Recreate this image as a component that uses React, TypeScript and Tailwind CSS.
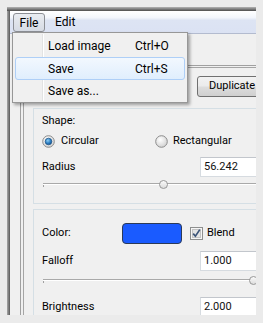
import React from "react";

function Radio({ checked }: { checked?: boolean }) {
  return (
    <svg width="13" height="13" viewBox="0 0 13 13" className="shrink-0">
      <defs>
        <radialGradient id="rOff" cx="40%" cy="35%" r="70%">
          <stop offset="0%" stopColor="#ffffff" />
          <stop offset="100%" stopColor="#cfcfcf" />
        </radialGradient>
        <radialGradient id="rOn" cx="40%" cy="35%" r="70%">
          <stop offset="0%" stopColor="#8fd0f5" />
          <stop offset="60%" stopColor="#2a7cc2" />
          <stop offset="100%" stopColor="#124c86" />
        </radialGradient>
      </defs>
      <circle cx="6.5" cy="6.5" r="5.8" fill="url(#rOff)" stroke="#8c8c8c" strokeWidth="1" />
      {checked && <circle cx="6.5" cy="6.5" r="3.3" fill="url(#rOn)" stroke="#255b8c" strokeWidth="0.8" />}
    </svg>
  );
}

function Checkbox() {
  return (
    <svg width="13" height="13" viewBox="0 0 13 13" className="shrink-0">
      <rect x="0.5" y="0.5" width="12" height="12" fill="#f6f6f6" stroke="#8e8f8f" />
      <rect x="2.5" y="2.5" width="8" height="8" fill="#e4e4e4" stroke="#c4c4c4" />
      <path d="M3.2 6.6 L5.4 9.2 L9.8 2.6" fill="none" stroke="#3b5478" strokeWidth="1.7" />
    </svg>
  );
}

function Slider({ thumb, className = "" }: { thumb: number; className?: string }) {
  return (
    <div className={`relative h-[14px] w-[230px] ${className}`}>
      <div className="absolute left-[1px] top-[5px] w-[1px] h-[4px] bg-[#a0a0a0]" />
      <div className="absolute left-[1px] right-0 top-[5px] h-[2px] border-t border-b border-t-[#a9a9a9] border-b-white" />
      <div
        className="absolute top-[2px] w-[9px] h-[9px] rounded-full border border-[#979797] bg-[linear-gradient(#fafafa,#dcdcdc)]"
        style={{ left: thumb }}
      />
    </div>
  );
}

function NumberBox({ value }: { value: string }) {
  return (
    <div className="w-[62px] h-[20px] shrink-0 bg-white border border-[#d6dbe0] border-t-[#c2c6cc] pl-[3px] flex items-center text-[11px] text-[#111]">
      {value}
    </div>
  );
}

function Row({ label, value, className = "" }: { label: string; value: string; className?: string }) {
  return (
    <div className={`flex items-center h-[20px] ${className}`}>
      <span className="w-[158px] shrink-0">{label}</span>
      <NumberBox value={value} />
    </div>
  );
}

export default function App() {
  return (
    <div className="relative w-[263px] h-[323px] overflow-hidden bg-[#ebebeb] pt-[7px] pl-[7px] font-['Roboto',sans-serif] text-black">
      <div className="w-[249px] h-[308px] flex flex-col overflow-hidden">
        <div className="h-[4px] shrink-0 bg-[linear-gradient(#b4b4b4,#4c4c4c)]" />
        <div className="flex flex-1 min-h-0">
          <div className="w-[3px] shrink-0 bg-[linear-gradient(90deg,#a8a8a8,#585858)]" />
          <div className="flex-1 min-w-0 bg-[#f0f0f0] flex flex-col overflow-hidden">
            {/* menu bar */}
            <div className="h-[23px] shrink-0 border-b border-[#b3bbcf] bg-[linear-gradient(#ffffff,#f3f6fc_30%,#dde4f3_42%,#dbe2f3)] flex items-start pl-[3px] text-[12px]">
              <div className="mt-[2px] h-[19px] w-[32px] rounded-[3px] border border-[#8c8f95] bg-[linear-gradient(#e9ecf1,#d6dbe4)] flex items-center justify-center">
                File
              </div>
              <div className="ml-[10px] h-[22px] flex items-center">Edit</div>
            </div>

            {/* main panel */}
            <div className="ml-[10px] mt-[31px] w-[260px] border-t border-l border-[#a0a0a0] pl-[2px] pt-[1px] flex-1">
              <div className="border-t border-l border-[#a5a5a5] h-full text-[11px]">
                <div className="ml-[173px] mt-[8px] h-[21px] w-[75px] rounded-[3px] border border-[#707070] bg-[linear-gradient(#f2f2f2,#ebebeb_48%,#dddddd_52%,#cfcfcf)] pl-[11px] flex items-center">
                  Duplicate
                </div>

                {/* shape group */}
                <div className="ml-[9px] mt-[11px] h-[96px] border-t border-l border-b border-[#d5dfe5] pl-[8px]">
                  <div className="h-[24px] flex items-center">Shape:</div>
                  <div className="h-[16px] flex items-center">
                    <div className="w-[113px] flex items-center gap-[6px]">
                      <Radio checked />
                      <span>Circular</span>
                    </div>
                    <div className="flex items-center gap-[5px]">
                      <Radio />
                      <span>Rectangular</span>
                    </div>
                  </div>
                  <Row label="Radius" value="56.242" className="mt-[8px]" />
                  <Slider thumb={117} className="mt-[1px]" />
                </div>

                {/* color group */}
                <div className="ml-[9px] mt-[5px] border-t border-l border-[#d5dfe5] pl-[8px] pt-[12px]">
                  <div className="h-[22px] flex items-center">
                    <span className="w-[80px] shrink-0">Color:</span>
                    <div className="w-[60px] h-[21px] shrink-0 rounded-[4px] border border-[#2b3a58] bg-[#1a5bff]" />
                    <div className="ml-[8px]">
                      <Checkbox />
                    </div>
                    <span className="ml-[4px]">Blend</span>
                  </div>
                  <Row label="Falloff" value="1.000" className="mt-[7px]" />
                  <Slider thumb={207} className="mt-[3px]" />
                  <Row label="Brightness" value="2.000" className="mt-[9px]" />
                </div>
              </div>
            </div>
          </div>
        </div>
      </div>

      {/* open File menu */}
      <div className="absolute left-[12px] top-[32px] w-[176px] h-[71px] border border-[#979797] bg-[#f0f0f0] shadow-[2px_2px_3px_rgba(0,0,0,0.35)] pt-[2px] text-[12px]">
        <div className="absolute left-[29px] top-[1px] bottom-[1px] w-[2px] border-l border-[#e2e3e3] border-r border-r-white" />
        <div className="relative h-[22px] flex items-center pl-[35px]">
          <span className="w-[87px]">Load image</span>
          <span>Ctrl+O</span>
        </div>
        <div className="relative mx-[2px] h-[23px] rounded-[3px] border border-[#aecff7] bg-[linear-gradient(#f2f8fe,#e0eefd)] flex items-center pl-[32px]">
          <span className="w-[87px]">Save</span>
          <span>Ctrl+S</span>
        </div>
        <div className="relative h-[21px] flex items-center pl-[35px]">Save as...</div>
      </div>
    </div>
  );
}
